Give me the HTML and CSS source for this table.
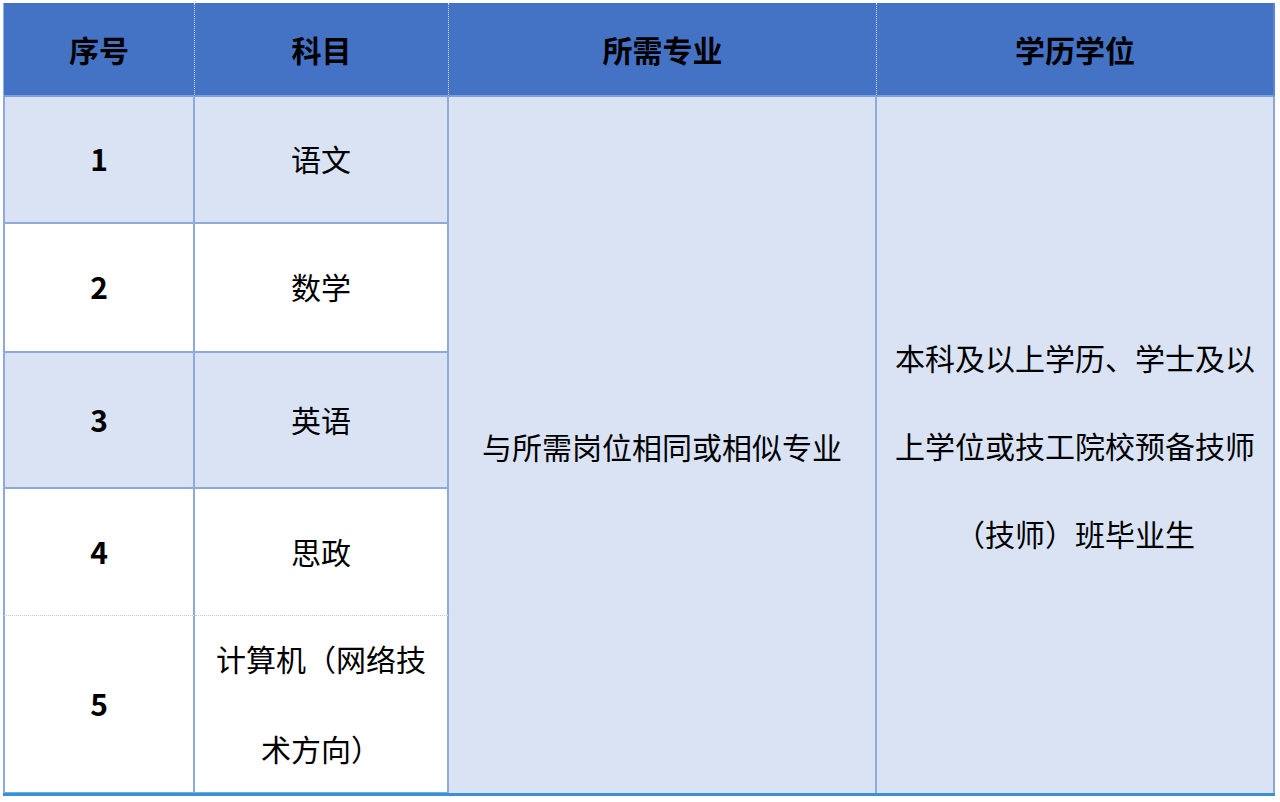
FILE: index.html
```html
<!DOCTYPE html>
<html lang="zh-CN">
<head>
<meta charset="utf-8">
<title>岗位要求</title>
<link rel="stylesheet" href="styles.css">
</head>
<body>
<div class="table">
  <div class="cell head c1">序号</div>
  <div class="cell head c2">科目</div>
  <div class="cell head c3">所需专业</div>
  <div class="cell head c4">学历学位</div>

  <div class="cell num shade r1">1</div>
  <div class="cell subj shade r1">语文</div>

  <div class="cell num r2">2</div>
  <div class="cell subj r2">数学</div>

  <div class="cell num shade r3">3</div>
  <div class="cell subj shade r3">英语</div>

  <div class="cell num r4 dotted">4</div>
  <div class="cell subj r4 dotted">思政</div>

  <div class="cell num r5 last">5</div>
  <div class="cell subj r5 last multi">计算机（网络技<br>术方向）</div>

  <div class="cell merged major">与所需岗位相同或相似专业</div>
  <div class="cell merged degree">本科及以上学历、学士及以<br>上学位或技工院校预备技师<br>（技师）班毕业生</div>
</div>
</body>
</html>
```
FILE: styles.css
```css
html, body {
  margin: 0;
  padding: 0;
  background: #ffffff;
}

body {
  font-family: "Noto Sans CJK SC", "Noto Sans", sans-serif;
  color: #000000;
}

.table {
  display: grid;
  grid-template-columns: 192px 254px 428px 398px;
  grid-template-rows: 94px 127px 129px 136px 127px 177px;
  width: 1272px;
  margin: 3px 0 0 3px;
  border-bottom: 3px solid #3b8fd5;
  box-shadow: 0 -1px 0 #63b3e6 inset;
}

.cell {
  box-sizing: border-box;
  display: flex;
  align-items: center;
  justify-content: center;
  text-align: center;
  font-size: 30px;
  line-height: 1.2;
}

.head {
  grid-row: 1;
  background: #4472c4;
  font-weight: 700;
  border-bottom: 2px solid #7d9fdb;
  border-right: 1px dotted rgba(255, 255, 255, 0.75);
}

.head.c1 { grid-column: 1; border-left: 1px solid #8fb0e6; }
.head.c2 { grid-column: 2; }
.head.c3 { grid-column: 3; }
.head.c4 { grid-column: 4; border-right: 2px solid #5a86cf; }

.num {
  grid-column: 1;
  font-weight: 700;
  padding-bottom: 3px;
  border-left: 2px solid #8eaadb;
  border-right: 2px solid #8eaadb;
  border-bottom: 2px solid #8eaadb;
}

.subj {
  grid-column: 2;
  padding-bottom: 3px;
  border-right: 2px solid #8eaadb;
  border-bottom: 2px solid #8eaadb;
}

.shade { background: #dae3f3; }

.r1 { grid-row: 2; }
.r2 { grid-row: 3; }
.r3 { grid-row: 4; }
.r4 { grid-row: 5; }
.r5 { grid-row: 6; }

.dotted { border-bottom: 1px dotted #c8c8c8; }
.last { border-bottom: none; }

.multi { line-height: 90px; }

.merged {
  grid-row: 2 / 7;
  background: #dae3f3;
  border-right: 2px solid #8eaadb;
}

.major { grid-column: 3; padding-top: 1px; }

.degree {
  grid-column: 4;
  line-height: 88px;
  border-right: 2px solid #8aa6d8;
}
```
